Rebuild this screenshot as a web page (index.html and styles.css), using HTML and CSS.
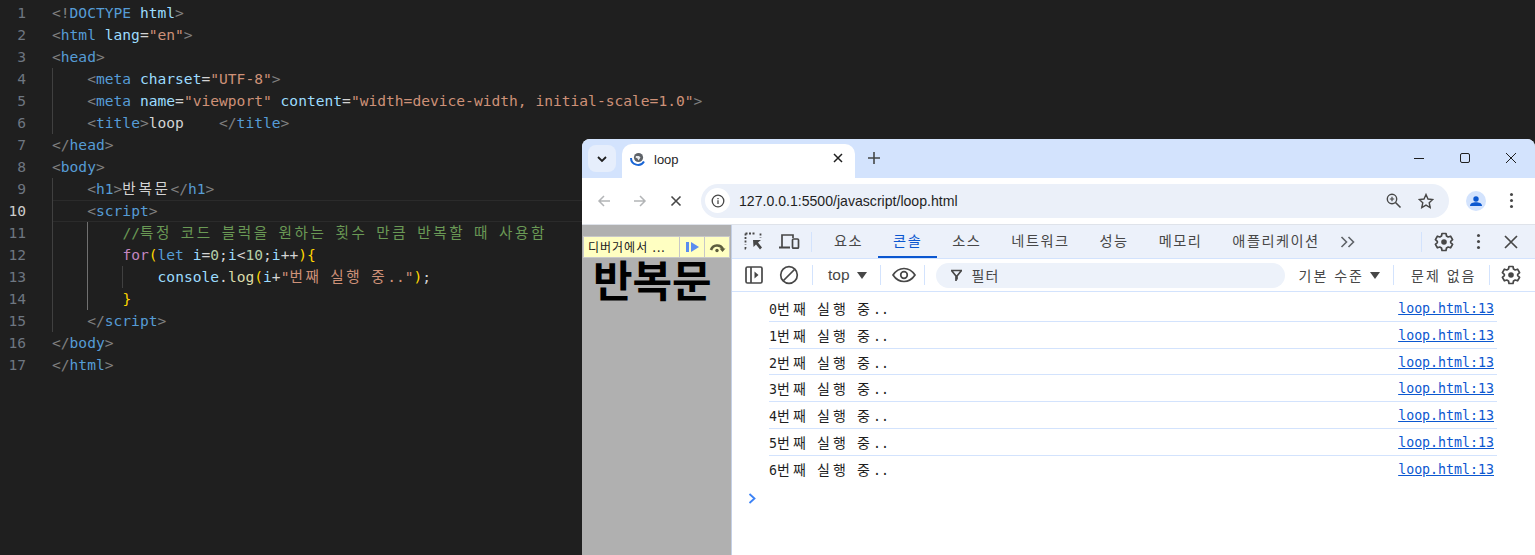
FILE: index.html
```html
<!DOCTYPE html>
<html lang="ko">
<head>
    <meta charset="UTF-8">
    <meta name="viewport" content="width=device-width, initial-scale=1.0">
    <title>loop</title>
    <link rel="stylesheet" href="styles.css">
</head>
<body>
    <div class="editor">
        <div class="line"><span class="num">1</span><span class="code"><b class="br">&lt;!</b><b class="tag">DOCTYPE</b> <b class="attr">html</b><b class="br">&gt;</b></span></div>
        <div class="line"><span class="num">2</span><span class="code"><b class="br">&lt;</b><b class="tag">html</b> <b class="attr">lang</b>=<b class="str">"en"</b><b class="br">&gt;</b></span></div>
        <div class="line"><span class="num">3</span><span class="code"><b class="br">&lt;</b><b class="tag">head</b><b class="br">&gt;</b></span></div>
        <div class="line"><span class="num">4</span><span class="code"><i class="guide"></i><b class="br">&lt;</b><b class="tag">meta</b> <b class="attr">charset</b>=<b class="str">"UTF-8"</b><b class="br">&gt;</b></span></div>
        <div class="line"><span class="num">5</span><span class="code"><i class="guide"></i><b class="br">&lt;</b><b class="tag">meta</b> <b class="attr">name</b>=<b class="str">"viewport"</b> <b class="attr">content</b>=<b class="str">"width=device-width, initial-scale=1.0"</b><b class="br">&gt;</b></span></div>
        <div class="line"><span class="num">6</span><span class="code"><i class="guide"></i><b class="br">&lt;</b><b class="tag">title</b><b class="br">&gt;</b>loop    <b class="br">&lt;/</b><b class="tag">title</b><b class="br">&gt;</b></span></div>
        <div class="line"><span class="num">7</span><span class="code"><b class="br">&lt;/</b><b class="tag">head</b><b class="br">&gt;</b></span></div>
        <div class="line"><span class="num">8</span><span class="code"><b class="br">&lt;</b><b class="tag">body</b><b class="br">&gt;</b></span></div>
        <div class="line"><span class="num">9</span><span class="code"><i class="guide"></i><b class="br">&lt;</b><b class="tag">h1</b><b class="br">&gt;</b><span class="ko">반복문</span><b class="br">&lt;/</b><b class="tag">h1</b><b class="br">&gt;</b></span></div>
        <div class="line current"><span class="num">10</span><span class="code"><i class="guide"></i><b class="br">&lt;</b><b class="tag">script</b><b class="br">&gt;</b></span></div>
        <div class="line"><span class="num">11</span><span class="code"><i class="guide"></i><i class="guide on"></i><b class="com">//<span class="ko">특정</span> <span class="ko">코드</span> <span class="ko">블럭을</span> <span class="ko">원하는</span> <span class="ko">횟수</span> <span class="ko">만큼</span> <span class="ko">반복할</span> <span class="ko">때</span> <span class="ko">사용함</span></b></span></div>
        <div class="line"><span class="num">12</span><span class="code"><i class="guide"></i><i class="guide on"></i><b class="kw">for</b><b class="y">(</b><b class="tag">let</b> <b class="attr">i</b>=<b class="n">0</b>;<b class="attr">i</b>&lt;<b class="n">10</b>;<b class="attr">i</b>++<b class="y">)</b><b class="y">{</b></span></div>
        <div class="line"><span class="num">13</span><span class="code"><i class="guide"></i><i class="guide on"></i><i class="guide"></i><b class="attr">console</b>.<b class="fn">log</b><b class="y">(</b><b class="attr">i</b>+<b class="str">"<span class="ko">번째</span> <span class="ko">실행</span> <span class="ko">중</span>.."</b><b class="y">)</b>;</span></div>
        <div class="line"><span class="num">14</span><span class="code"><i class="guide"></i><i class="guide on"></i><b class="y">}</b></span></div>
        <div class="line"><span class="num">15</span><span class="code"><i class="guide"></i><b class="br">&lt;/</b><b class="tag">script</b><b class="br">&gt;</b></span></div>
        <div class="line"><span class="num">16</span><span class="code"><b class="br">&lt;/</b><b class="tag">body</b><b class="br">&gt;</b></span></div>
        <div class="line"><span class="num">17</span><span class="code"><b class="br">&lt;/</b><b class="tag">html</b><b class="br">&gt;</b></span></div>
    </div>

    <div class="window">
        <div class="tabstrip">
            <div class="tab-search">
                <svg width="12" height="12" viewBox="0 0 12 12"><path d="M2 4l4 4 4-4" fill="none" stroke="#1f1f1f" stroke-width="1.8"/></svg>
            </div>
            <div class="tab">
                <svg class="spinner" width="16" height="16" viewBox="0 0 16 16">
                    <circle cx="8.5" cy="7.5" r="4.6" fill="#5f6368"/>
                    <path d="M6 6h3l1.500 1.500-2 3-1-2-2-1z" fill="#e8eaed"/>
                    <path d="M1 8a7 7 0 0 0 13 3.500" fill="none" stroke="#1a66d6" stroke-width="2"/>
                </svg>
                <span class="tab-title">loop</span>
                <svg width="12" height="12" viewBox="0 0 12 12"><path d="M2 2l8 8M10 2l-8 8" stroke="#1f1f1f" stroke-width="1.500"/></svg>
            </div>
            <svg class="newtab" width="12" height="12" viewBox="0 0 12 12"><path d="M6 0v12M0 6h12" stroke="#444746" stroke-width="1.600"/></svg>
            <div class="win-controls">
                <svg width="12" height="12" viewBox="0 0 12 12"><path d="M1 6.500h10" stroke="#1f1f1f" stroke-width="1"/></svg>
                <svg width="12" height="12" viewBox="0 0 12 12"><rect x="1.500" y="1.500" width="9" height="9" rx="1.500" fill="none" stroke="#1f1f1f" stroke-width="1"/></svg>
                <svg width="12" height="12" viewBox="0 0 12 12"><path d="M1 1l10 10M11 1L1 11" stroke="#1f1f1f" stroke-width="1"/></svg>
            </div>
        </div>

        <div class="toolbar">
            <svg class="nav" width="14" height="14" viewBox="0 0 14 14"><path d="M13 7H2M7 2L2 7l5 5" fill="none" stroke="#b3b5b7" stroke-width="1.500"/></svg>
            <svg class="nav" width="14" height="14" viewBox="0 0 14 14"><path d="M1 7h11M7 2l5 5-5 5" fill="none" stroke="#b3b5b7" stroke-width="1.500"/></svg>
            <svg class="nav" width="14" height="14" viewBox="0 0 14 14"><path d="M2.500 2.500l9 9M11.500 2.500l-9 9" stroke="#474747" stroke-width="1.600"/></svg>
            <div class="omnibox">
                <div class="site-info">
                    <svg width="14" height="14" viewBox="0 0 14 14"><circle cx="7" cy="7" r="5.800" fill="none" stroke="#474747" stroke-width="1.300"/><path d="M7 6.300v3.700M7 4v1.300" stroke="#474747" stroke-width="1.300"/></svg>
                </div>
                <span class="url">127.0.0.1:5500/javascript/loop.html</span>
                <svg class="omni-zoom" width="18" height="18" viewBox="0 0 18 18"><circle cx="7" cy="7" r="4.700" fill="none" stroke="#474747" stroke-width="1.400"/><path d="M10.500 10.500l5 5" stroke="#474747" stroke-width="1.600"/><path d="M7 4.800v4.400M4.800 7h4.400" stroke="#474747" stroke-width="1.200"/></svg>
                <svg class="omni-star" width="16" height="16" viewBox="0 0 16 16"><path d="M8 1.500l2 4.500 4.800.5-3.600 3.200 1 4.800L8 12.100l-4.200 2.400 1-4.800L1.200 6.500 6 6z" fill="none" stroke="#474747" stroke-width="1.400"/></svg>
            </div>
            <div class="avatar">
                <svg width="20" height="20" viewBox="0 0 20 20"><circle cx="10" cy="10" r="10" fill="#d3e3fd"/><circle cx="10" cy="8" r="2.700" fill="#0b57d0"/><path d="M4 15c0-3 3-3.800 6-3.800s6 .8 6 3.800z" fill="#0b57d0"/></svg>
            </div>
            <div class="dots"><i></i><i></i><i></i></div>
        </div>

        <div class="content">
            <div class="page">
                <div class="paused">
                    <span class="paused-msg">디버거에서 ...</span>
                    <span class="paused-btn">
                        <svg width="15" height="12" viewBox="0 0 15 12"><path d="M1 1h3v10H1z" fill="#5b8def"/><path d="M6 1l8 5-8 5z" fill="#5b8def"/></svg>
                    </span>
                    <span class="paused-btn">
                        <svg width="17" height="12" viewBox="0 0 17 12"><path d="M2 9a6.500 6.500 0 0 1 12 -1" fill="none" stroke="#5e5e3f" stroke-width="2.600"/><path d="M10.500 7.500h6l-3 3.500z" fill="#5e5e3f"/><circle cx="8" cy="9.500" r="1.700" fill="#5e5e3f"/></svg>
                    </span>
                </div>
                <h1 class="page-title">반복문</h1>
            </div>

            <div class="devtools">
                <div class="dt-tabs">
                    <svg class="dt-inspect" width="20" height="20" viewBox="0 0 20 20"><path d="M1.500 1.500h10M1.500 1.500v11M1.500 15v1.500h2" fill="none" stroke="#474747" stroke-width="1.800" stroke-dasharray="2 1.500"/><path d="M16.500 1.500v4" stroke="#474747" stroke-width="1.800" stroke-dasharray="2 1.500"/><path d="M9 8h8l-3 2.500 4 5-2 2-4-5L9.500 15z" fill="#474747"/></svg>
                    <svg class="dt-device" width="22" height="18" viewBox="0 0 22 18"><path d="M4 14V2h11v3" fill="none" stroke="#474747" stroke-width="1.700"/><path d="M1 13.500h11v2H1z" fill="#474747"/><rect x="14.500" y="6" width="6" height="9.200" rx="1" fill="none" stroke="#474747" stroke-width="1.700"/></svg>
                    <span class="sep sep-tabs"></span>
                    <span class="dt-tab">요소</span>
                    <span class="dt-tab active">콘솔</span>
                    <span class="dt-tab">소스</span>
                    <span class="dt-tab">네트워크</span>
                    <span class="dt-tab">성능</span>
                    <span class="dt-tab">메모리</span>
                    <span class="dt-tab">애플리케이션</span>
                    <svg class="dt-more" width="16" height="12" viewBox="0 0 16 12"><path d="M1.500 1l5 5-5 5M8.500 1l5 5-5 5" fill="none" stroke="#5f6368" stroke-width="1.600"/></svg>
                    <span class="sep sep-right"></span>
                    <svg class="gear gear-tabs" width="20" height="20" viewBox="0 0 20 20"><use href="#gear"/></svg>
                    <div class="dots dots-dt"><i></i><i></i><i></i></div>
                    <svg class="dt-close" width="14" height="14" viewBox="0 0 14 14"><path d="M1 1l12 12M13 1L1 13" stroke="#474747" stroke-width="1.700"/></svg>
                </div>

                <div class="dt-bar">
                    <svg class="bar-side" width="18" height="18" viewBox="0 0 18 18"><rect x="1" y="1" width="16" height="16" rx="1.500" fill="none" stroke="#474747" stroke-width="1.700"/><path d="M6 1v16" stroke="#474747" stroke-width="1.700"/><path d="M9.500 5.500l4 3.500-4 3.500z" fill="#474747"/></svg>
                    <svg class="bar-block" width="20" height="20" viewBox="0 0 20 20"><circle cx="10" cy="10" r="8.300" fill="none" stroke="#474747" stroke-width="1.700"/><path d="M4.500 15.500l11-11" stroke="#474747" stroke-width="1.700"/></svg>
                    <span class="sep sep-block"></span>
                    <span class="bar-text bar-top">top</span>
                    <i class="tri tri-top"></i>
                    <span class="sep sep-top"></span>
                    <svg class="bar-eye" width="24" height="16" viewBox="0 0 24 16"><path d="M1 8c3-4.500 6.500-6.500 11-6.500S20 3.500 23 8c-3 4.500-6.500 6.500-11 6.500S4 12.500 1 8z" fill="none" stroke="#474747" stroke-width="1.700"/><circle cx="12" cy="8" r="3.300" fill="none" stroke="#474747" stroke-width="1.700"/></svg>
                    <span class="sep sep-eye"></span>
                    <div class="filter">
                        <svg width="13" height="13" viewBox="0 0 13 13"><path d="M1 1.500h11M1.500 1.500L6 7v5M11.500 1.500L7 7v3.500" fill="none" stroke="#474747" stroke-width="1.700"/></svg>
                        <span class="bar-text">필터</span>
                    </div>
                    <span class="bar-text bar-level">기본 수준</span>
                    <i class="tri tri-level"></i>
                    <span class="sep sep-level"></span>
                    <span class="bar-text bar-issues">문제 없음</span>
                    <span class="sep sep-issues"></span>
                    <svg class="gear gear-bar" width="20" height="20" viewBox="0 0 20 20"><use href="#gear"/></svg>
                </div>

                <div class="console">
                    <div class="msg"><span class="msg-text">0<span class="mko">번째</span> <span class="mko">실행</span> <span class="mko">중</span>..</span><a class="src">loop.html:13</a></div>
                    <div class="msg"><span class="msg-text">1<span class="mko">번째</span> <span class="mko">실행</span> <span class="mko">중</span>..</span><a class="src">loop.html:13</a></div>
                    <div class="msg"><span class="msg-text">2<span class="mko">번째</span> <span class="mko">실행</span> <span class="mko">중</span>..</span><a class="src">loop.html:13</a></div>
                    <div class="msg"><span class="msg-text">3<span class="mko">번째</span> <span class="mko">실행</span> <span class="mko">중</span>..</span><a class="src">loop.html:13</a></div>
                    <div class="msg"><span class="msg-text">4<span class="mko">번째</span> <span class="mko">실행</span> <span class="mko">중</span>..</span><a class="src">loop.html:13</a></div>
                    <div class="msg"><span class="msg-text">5<span class="mko">번째</span> <span class="mko">실행</span> <span class="mko">중</span>..</span><a class="src">loop.html:13</a></div>
                    <div class="msg last"><span class="msg-text">6<span class="mko">번째</span> <span class="mko">실행</span> <span class="mko">중</span>..</span><a class="src">loop.html:13</a></div>
                    <svg class="prompt" width="8" height="11" viewBox="0 0 8 11"><path d="M1.500 1l5 4.500-5 4.500" fill="none" stroke="#3b82f6" stroke-width="1.800"/></svg>
                </div>
            </div>
        </div>
    </div>

    <svg class="defs" width="0" height="0">
        <symbol id="gear" viewBox="0 0 20 20">
            <path d="M8 1.500h4l.5 2.500 1.700 1 2.400-.8 2 3.400-1.900 1.700v1.400l1.900 1.700-2 3.400-2.400-.8-1.700 1-.5 2.500H8l-.5-2.500-1.700-1-2.400.8-2-3.400 1.900-1.700V9.300L1.400 7.600l2-3.400 2.400.8 1.700-1z" fill="none" stroke="#474747" stroke-width="1.700" stroke-linejoin="round"/>
            <circle cx="10" cy="10" r="2.800" fill="#474747"/>
        </symbol>
    </svg>
</body>
</html>
```

FILE: styles.css
```css
* {
    box-sizing: border-box;
}

html, body {
    height: 100%;
}

body {
    margin: 0;
    background-color: #1f1f1f;
    overflow: hidden;
    position: relative;
    font-family: "Noto Sans CJK KR", "Liberation Sans", sans-serif;
}

b, i {
    font-weight: normal;
    font-style: normal;
}

/* code editor */
.editor {
    padding-top: 2px;
    font-family: "DejaVu Sans Mono", monospace;
    font-size: 14.6px;
    color: #d4d4d4;
}

.line {
    display: flex;
    height: 22px;
    line-height: 22px;
    white-space: pre;
}

.line.current {
    box-shadow: inset 0 0 0 1px #2b2b2b;
    margin-left: 52px;
}

.line.current .num {
    margin-left: -52px;
    color: #cccccc;
}

.num {
    flex: none;
    width: 26px;
    margin-right: 26px;
    text-align: right;
    color: #6e7681;
}

.code {
    display: block;
    height: 22px;
}

.guide {
    display: inline-block;
    width: 35.2px;
    height: 22px;
    vertical-align: top;
    border-left: 1px solid #404040;
}

.guide.on {
    border-left-color: #707070;
}

.ko {
    font-family: "Noto Sans CJK KR", sans-serif;
    font-size: 14.6px;
    line-height: 20px;
    letter-spacing: 2.600px;
}

.br { color: #808080; }
.tag { color: #569cd6; }
.attr { color: #9cdcfe; }
.str { color: #ce9178; }
.com { color: #6a9955; }
.kw { color: #c586c0; }
.n { color: #b5cea8; }
.fn { color: #dcdcaa; }
.y { color: #ffd700; }

/* browser window */
.window {
    position: absolute;
    left: 582px;
    top: 139px;
    right: 0;
    bottom: 0;
    display: flex;
    flex-direction: column;
    background-color: white;
    border-radius: 8px 8px 0 0;
    overflow: hidden;
}

.tabstrip {
    flex: none;
    display: flex;
    align-items: flex-end;
    height: 39px;
    background-color: #d3e3fd;
}

.tab-search {
    display: flex;
    align-items: center;
    justify-content: center;
    width: 28px;
    height: 27px;
    margin: 0 6px 6px 6px;
    background-color: #e6eefc;
    border-radius: 8px;
}

.tab {
    display: flex;
    align-items: center;
    width: 233px;
    height: 34px;
    padding: 0 11px 6px 8px;
    background-color: white;
    border-radius: 10px 10px 0 0;
}

.tab-title {
    flex: 1;
    margin-left: 8px;
    padding-top: 2px;
    font-family: "Liberation Sans", sans-serif;
    font-size: 13px;
    color: #1f1f1f;
}

.newtab {
    margin: 0 0 14px 13px;
}

.win-controls {
    display: flex;
    gap: 34px;
    margin: 0 18px 14px auto;
}

.toolbar {
    flex: none;
    display: flex;
    align-items: center;
    height: 47px;
    padding: 0 0 1px 15px;
    border-bottom: 1px solid #dfe3ea;
}

.nav {
    margin-right: 22px;
}

.omnibox {
    display: flex;
    align-items: center;
    width: 748px;
    height: 34px;
    margin-left: -4px;
    padding: 0 15px 0 4px;
    background-color: #ebf0f9;
    border-radius: 17px;
}

.site-info {
    display: flex;
    align-items: center;
    justify-content: center;
    width: 25px;
    height: 25px;
    background-color: white;
    border-radius: 50%;
}

.url {
    flex: 1;
    margin-left: 9px;
    font-family: "Liberation Sans", sans-serif;
    font-size: 14.100px;
    color: #1f1f1f;
}

.omni-star {
    margin-left: 15px;
}

.avatar {
    display: flex;
    margin-left: 17px;
}

.dots {
    display: flex;
    flex-direction: column;
    gap: 3px;
    margin-left: 24px;
}

.dots i {
    width: 3px;
    height: 3px;
    background-color: #474747;
    border-radius: 50%;
}

.content {
    flex: 1;
    display: flex;
    min-height: 0;
}

/* paused page */
.page {
    flex: none;
    width: 149px;
    padding-top: 11px;
    background-color: #b0b0b0;
    overflow: hidden;
}

.paused {
    display: flex;
    height: 22px;
    margin: 0 1px;
    background-color: #ffffc2;
    border: 1px solid #c8c8c8;
}

.paused-msg {
    flex: 1;
    padding-left: 4px;
    font-size: 12px;
    line-height: 20px;
    letter-spacing: 1px;
    color: #202020;
    white-space: nowrap;
    overflow: hidden;
}

.paused-btn {
    display: flex;
    flex: none;
    align-items: center;
    justify-content: center;
    width: 25px;
    border-left: 1px solid #c8c8c8;
}

.page-title {
    margin: 0;
    padding-left: 11px;
    font-size: 43px;
    line-height: 41px;
    font-weight: 700;
    color: black;
    white-space: nowrap;
}

/* devtools */
.devtools {
    flex: 1;
    display: flex;
    flex-direction: column;
    min-width: 0;
    border-left: 1px solid #c4d0e6;
}

.dt-tabs {
    flex: none;
    display: flex;
    align-items: center;
    height: 34px;
    background-color: #ecf1fa;
    border-bottom: 1px solid #d3e3fd;
}

.dt-inspect {
    margin-left: 12px;
}

.dt-device {
    margin-left: 14px;
}

.sep {
    flex: none;
    width: 1px;
    height: 20px;
    background-color: #d3e3fd;
}

.sep-tabs {
    margin: 0 7px 0 11px;
}

.dt-tab {
    position: relative;
    height: 33px;
    padding: 0 15px;
    font-size: 14.200px;
    line-height: 31px;
    letter-spacing: 1.500px;
    color: #474747;
    white-space: nowrap;
}

.dt-tab.active {
    color: #0b57d0;
    border-bottom: 2px solid #0b57d0;
}

.dt-more {
    margin-left: 5px;
}

.sep-right {
    margin-left: 65px;
}

.gear-tabs {
    margin-left: 12px;
}

.dots-dt {
    margin-left: 23px;
}

.dt-close {
    margin-left: 24px;
}

.dt-bar {
    flex: none;
    display: flex;
    align-items: center;
    height: 33px;
    border-bottom: 1px solid #d3e3fd;
}

.bar-side {
    margin-left: 13px;
}

.bar-block {
    margin-left: 16px;
}

.sep-block {
    margin-left: 13px;
}

.bar-text {
    font-size: 14px;
    letter-spacing: 1px;
    color: #474747;
    white-space: nowrap;
}

.bar-top {
    margin-left: 15px;
    font-family: "Liberation Sans", sans-serif;
    font-size: 15.500px;
    letter-spacing: 0;
}

.tri {
    flex: none;
    width: 0;
    height: 0;
    border-left: 5px solid transparent;
    border-right: 5px solid transparent;
    border-top: 7px solid #474747;
}

.tri-top {
    margin-left: 7px;
}

.sep-top {
    margin-left: 13px;
}

.bar-eye {
    margin-left: 11px;
}

.sep-eye {
    margin-left: 8px;
}

.filter {
    display: flex;
    align-items: center;
    gap: 9px;
    width: 349px;
    height: 25px;
    margin-left: 11px;
    padding-left: 14px;
    background-color: #edf2fa;
    border-radius: 13px;
}

.bar-level {
    margin-left: 14px;
    letter-spacing: 2px;
}

.tri-level {
    margin-left: 6px;
}

.sep-level {
    margin-left: 13px;
}

.bar-issues {
    margin-left: 17px;
    letter-spacing: 2px;
}

.sep-issues {
    margin-left: 13px;
}

.gear-bar {
    margin-left: 11px;
}

.console {
    flex: 1;
    padding: 3px 0 0 37px;
    background-color: white;
    font-family: "DejaVu Sans Mono", monospace;
    font-size: 13.280px;
    color: #1f1f1f;
}

.msg {
    display: flex;
    justify-content: space-between;
    width: 728px;
    height: 26.800px;
    padding-right: 3px;
    line-height: 26px;
    border-bottom: 1px solid #d3e3fd;
    white-space: pre;
}

.msg.last {
    border-bottom: none;
}

.mko {
    font-family: "Noto Sans CJK KR", sans-serif;
    font-size: 14px;
    letter-spacing: 3.100px;
}

.src {
    padding-top: 1px;
    color: #0b57d0;
    text-decoration: underline;
}

.prompt {
    display: block;
    margin: 10px 0 0 -21px;
}

.defs {
    position: absolute;
}
```
